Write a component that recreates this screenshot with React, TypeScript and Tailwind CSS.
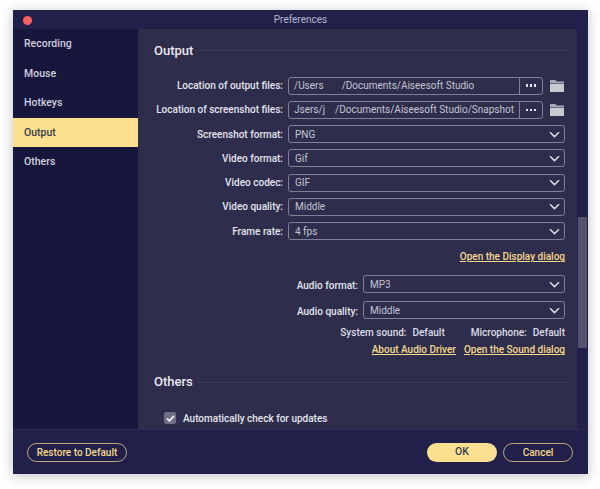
import React from 'react';

const font = { fontFamily: 'Roboto, "Liberation Sans", Arial, sans-serif' };

const menu = ['Recording', 'Mouse', 'Hotkeys', 'Output', 'Others'];

function Chevron() {
  return (
    <svg width="11" height="7" viewBox="0 0 11 7" fill="none" className="shrink-0">
      <path d="M1 1.2 5.5 5.6 10 1.2" stroke="#dcdce6" strokeWidth="1.5" />
    </svg>
  );
}

function FolderIcon() {
  return (
    <svg width="14" height="12" viewBox="0 0 14 12" className="shrink-0">
      <path d="M0 0h5.5l1 1.5H14V3H0z" fill="#a9a9b5" />
      <path d="M0 3.6h14V12H0z" fill="#c9c9d2" />
    </svg>
  );
}

function Label({ children }: { children: React.ReactNode }) {
  return <span className="text-[10px] font-medium text-[#e4e4ec] whitespace-nowrap text-right">{children}</span>;
}

function PathRow({ label, value }: { label: string; value: React.ReactNode }) {
  return (
    <div className="flex items-center h-[18px]">
      <div className="w-[136px] flex justify-end pr-[5px] shrink-0">
        <Label>{label}</Label>
      </div>
      <div className="w-[255px] h-[18px] flex border border-[#7f7f95] rounded-[3px] shrink-0">
        <div className="w-[231px] border-r border-[#7f7f95] pl-[5px] text-[10px] leading-[16px] text-[#c5c5d2] whitespace-nowrap overflow-hidden">
          {value}
        </div>
        <div className="flex-1 flex items-center justify-center gap-[1.5px]">
          <span className="w-[2.5px] h-[2.5px] bg-[#e6e6ee]" />
          <span className="w-[2.5px] h-[2.5px] bg-[#e6e6ee]" />
          <span className="w-[2.5px] h-[2.5px] bg-[#e6e6ee]" />
        </div>
      </div>
      <div className="ml-[7px]">
        <FolderIcon />
      </div>
    </div>
  );
}

function SelectBox({ value, className }: { value: string; className: string }) {
  return (
    <div className={`${className} h-[18px] flex items-center justify-between border border-[#7f7f95] rounded-[3px] pl-[6px] pr-[4px] shrink-0`}>
      <span className="text-[10px] text-[#c5c5d2]">{value}</span>
      <Chevron />
    </div>
  );
}

function SelectRow({ label, value }: { label: string; value: string }) {
  return (
    <div className="flex items-center h-[18px]">
      <div className="w-[136px] flex justify-end pr-[5px] shrink-0">
        <Label>{label}</Label>
      </div>
      <SelectBox value={value} className="w-[277px]" />
    </div>
  );
}

function AudioRow({ label, value }: { label: string; value: string }) {
  return (
    <div className="flex items-center justify-end h-[18px]">
      <div className="pr-[5px]">
        <Label>{label}</Label>
      </div>
      <SelectBox value={value} className="w-[202px]" />
    </div>
  );
}

function SectionTitle({ children }: { children: React.ReactNode }) {
  return (
    <div className="flex items-center gap-[6px]">
      <span className="text-[13px] font-medium text-[#e8e8f0]">{children}</span>
      <span className="flex-1 h-px bg-[#3a3a55]" />
    </div>
  );
}

function LinkText({ children }: { children: React.ReactNode }) {
  return <a className="text-[10px] font-medium text-[#f5d98c] underline whitespace-nowrap">{children}</a>;
}

export default function App() {
  return (
    <div className="w-[600px] h-[489px] bg-white pt-[10px] pl-[13px] overflow-hidden" style={font}>
      <div className="w-[575px] h-[464px] bg-[#21204a] flex flex-col shadow-[0_2px_12px_rgba(0,0,0,0.25)]">
        {/* title bar */}
        <div className="h-[19px] relative flex items-center justify-center shrink-0">
          <span className="absolute left-[10px] top-[6px] w-[9px] h-[9px] rounded-full bg-[#f9605c]" />
          <span className="text-[10px] text-[#b9b9c6]">Preferences</span>
        </div>

        <div className="flex h-[400px] shrink-0">
          {/* sidebar */}
          <div className="w-[125px] bg-[#17163d] shrink-0">
            {menu.map((m) => (
              <div
                key={m}
                className={`h-[29.5px] flex items-center pl-[11px] pt-[1px] text-[10.5px] font-medium ${
                  m === 'Output' ? 'bg-[#fddf90] text-[#3a3a4a]' : 'text-[#cfcfdc]'
                }`}
              >
                {m}
              </div>
            ))}
          </div>

          {/* content */}
          <div className="w-[439px] bg-[#2e2d4c] pl-[16px] pr-[9px] pt-[12px] overflow-hidden shrink-0">
            <SectionTitle>Output</SectionTitle>
            <div className="mt-[16px] ml-[-2px] flex flex-col gap-[6.3px]">
              <PathRow
                label="Location of output files:"
                value={<>/Users<span className="inline-block w-[18px]" />/Documents/Aiseesoft Studio</>}
              />
              <PathRow
                label="Location of screenshot files:"
                value={<>Jsers/j<span className="inline-block w-[10px]" />/Documents/Aiseesoft Studio/Snapshot</>}
              />
              <SelectRow label="Screenshot format:" value="PNG" />
              <SelectRow label="Video format:" value="Gif" />
              <SelectRow label="Video codec:" value="GIF" />
              <SelectRow label="Video quality:" value="Middle" />
              <SelectRow label="Frame rate:" value="4 fps" />
            </div>
            <div className="mt-[10px] flex justify-end pr-[3px] h-[13px] items-center">
              <LinkText>Open the Display dialog</LinkText>
            </div>
            <div className="mt-[12px] pr-[3px] flex flex-col gap-[8px]">
              <AudioRow label="Audio format:" value="MP3" />
              <AudioRow label="Audio quality:" value="Middle" />
            </div>
            <div className="mt-[7px] pr-[3px] flex justify-end text-[10px] font-medium text-[#dcdce6] h-[13px] items-center">
              <span>System sound:</span>
              <span className="ml-[6px]">Default</span>
              <span className="ml-[26px]">Microphone:</span>
              <span className="ml-[6px]">Default</span>
            </div>
            <div className="mt-[4px] pr-[3px] flex justify-end gap-[8px] h-[13px] items-center">
              <LinkText>About Audio Driver</LinkText>
              <LinkText>Open the Sound dialog</LinkText>
            </div>
            <div className="mt-[16px]">
              <SectionTitle>Others</SectionTitle>
            </div>
            <div className="mt-[19px] ml-[10px] flex items-center gap-[7px]">
              <span className="w-[12px] h-[12px] rounded-[2px] bg-[#6f6f84] flex items-center justify-center">
                <svg width="9" height="7" viewBox="0 0 9 7" fill="none">
                  <path d="M1 3.5 3.4 5.8 8 1" stroke="#fff" strokeWidth="1.6" />
                </svg>
              </span>
              <span className="text-[10px] font-medium text-[#e4e4ec]">Automatically check for updates</span>
            </div>
          </div>

          {/* scrollbar */}
          <div className="flex-1 pt-[188px] pl-[1px] pr-[1px]">
            <div className="h-[131px] bg-[#54536d] rounded-[1px]" />
          </div>
        </div>

        {/* footer */}
        <div className="flex-1 border-t border-[#2e2d4c] flex items-center justify-between pl-[14px] pr-[15px]">
          <button className="w-[100px] h-[19px] rounded-full border border-[#bfa878] text-[10px] font-medium text-[#f5d98c]">
            Restore to Default
          </button>
          <div className="flex gap-[6px]">
            <button className="w-[70px] h-[19px] rounded-full bg-[#fddf90] text-[10.5px] font-medium text-[#3a3a4a]">OK</button>
            <button className="w-[70px] h-[19px] rounded-full border border-[#bfa878] text-[10px] font-medium text-[#f5d98c]">
              Cancel
            </button>
          </div>
        </div>
      </div>
    </div>
  );
}
